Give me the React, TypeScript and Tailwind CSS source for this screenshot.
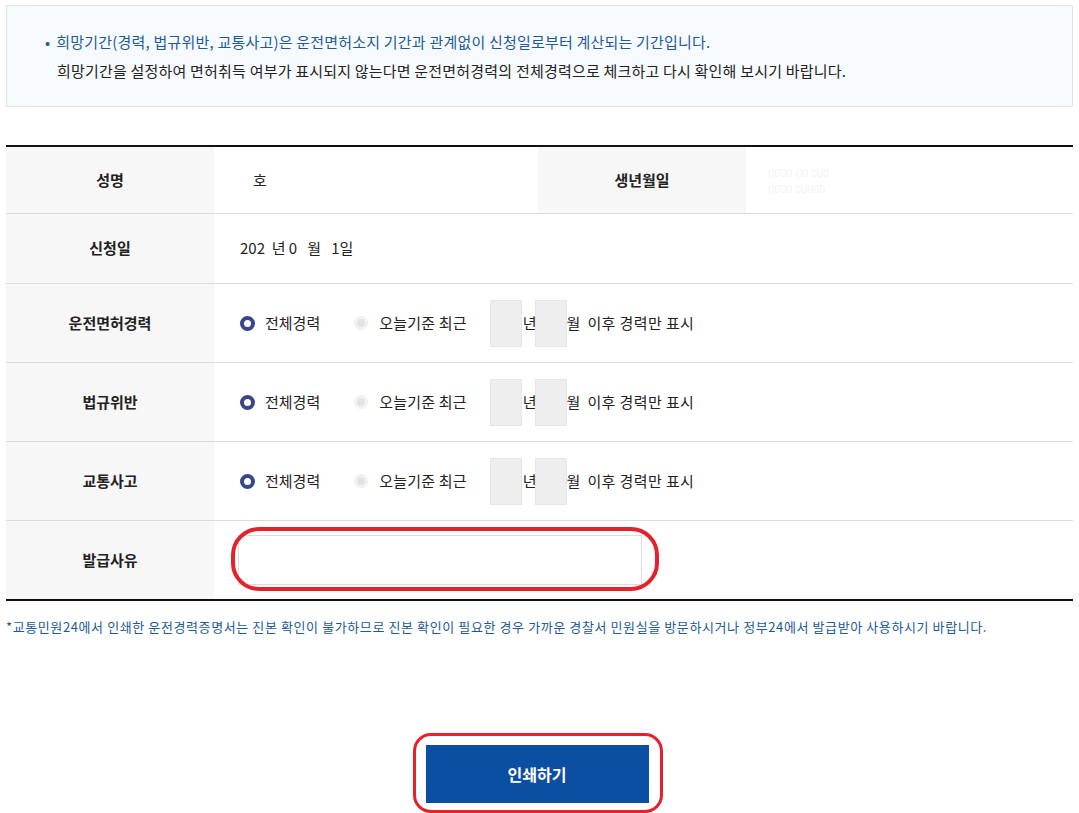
import React from "react";

const font = { fontFamily: '"Noto Sans CJK KR", "Noto Sans", sans-serif' };

const Label = ({ children }: { children: React.ReactNode }) => (
  <div className="w-[208px] shrink-0 bg-[#f7f7f7] flex items-center justify-center text-[15px] font-bold text-[#222]">
    {children}
  </div>
);

const PeriodRow = ({ title }: { title: string }) => (
  <div className="flex h-[79px] border-b border-[#dcdcdc]">
    <Label>{title}</Label>
    <div className="flex items-center pl-[26px] text-[15px] text-[#222]">
      <span className="w-[15px] h-[15px] rounded-full border-[4px] border-[#3a4787] bg-white" />
      <span className="ml-[10px]">전체경력</span>
      <span className="ml-[34px] w-[14px] h-[14px] rounded-full border border-[#eeeeee] bg-[#f3f3f3] flex items-center justify-center">
        <span className="w-[8px] h-[8px] rounded-full bg-[#e3e3e3]" />
      </span>
      <span className="ml-[11px] tracking-[0.2px]">오늘기준 최근</span>
      <span className="ml-[23px] w-[32px] h-[47px] bg-[#eeeeee] border border-[#e6e6e6]" />
      <span className="ml-[1px]">년</span>
      <span className="ml-[-2px] w-[32px] h-[47px] bg-[#eeeeee] border border-[#e6e6e6]" />
      <span>월</span>
      <span className="ml-[7px] tracking-[0.4px]">이후 경력만 표시</span>
    </div>
  </div>
);

export default function App() {
  return (
    <div className="w-[1079px] h-[813px] bg-white px-[6px] pt-[5px]" style={font}>
      <div className="h-[102px] border border-[#e3e3e3] bg-[#f7fafd] pl-[38px] pt-[21px] text-[15px] leading-[29px] tracking-[0.2px]">
        <p className="text-[#1c5b98]">
          <span className="mr-[6px]">•</span>희망기간(경력, 법규위반, 교통사고)은 운전면허소지 기간과 관계없이 신청일로부터 계산되는 기간입니다.
        </p>
        <p className="pl-[12px] text-[#222]">
          희망기간을 설정하여 면허취득 여부가 표시되지 않는다면 운전면허경력의 전체경력으로 체크하고 다시 확인해 보시기 바랍니다.
        </p>
      </div>

      <div className="mt-[38px] border-t-2 border-b-2 border-[#111]">
        <div className="flex h-[67px] border-b border-[#dcdcdc]">
          <Label>성명</Label>
          <div className="w-[324px] flex items-center pl-[39px] text-[15px] text-[#222]">호</div>
          <Label>생년월일</Label>
          <div className="flex-1 flex flex-col justify-center pl-[22px] text-[11px] text-[#f4f4f4] leading-[16px]">
            <span>0000-00 000</span>
            <span>0000 00000</span>
          </div>
        </div>
        <div className="flex h-[70px] border-b border-[#dcdcdc]">
          <Label>신청일</Label>
          <div className="flex items-center pl-[26px] text-[15px] text-[#222] whitespace-pre">
            202  년 0   월   1일
          </div>
        </div>
        <PeriodRow title="운전면허경력" />
        <PeriodRow title="법규위반" />
        <PeriodRow title="교통사고" />
        <div className="flex h-[78px]">
          <Label>발급사유</Label>
          <div className="flex items-center pl-[24px]">
            <div className="relative">
              <div className="w-[404px] h-[50px] border border-[#dddddd] bg-white" />
              <div className="absolute left-[-7px] top-[-8px] w-[428px] h-[64px] border-[4px] border-[#e3222b] rounded-[28px]" />
            </div>
          </div>
        </div>
      </div>

      <p className="mt-[16px] text-[13px] tracking-[0.6px] text-[#1c5b98]">
        *교통민원24에서 인쇄한 운전경력증명서는 진본 확인이 불가하므로 진본 확인이 필요한 경우 가까운 경찰서 민원실을 방문하시거나 정부24에서 발급받아 사용하시기 바랍니다.
      </p>

      <div className="mt-[108px] flex justify-center">
        <div className="relative ml-[-5px]">
          <button className="w-[223px] h-[58px] bg-[#0b4fa2] text-white text-[16px] font-bold">
            인쇄하기
          </button>
          <div className="absolute left-[-13px] top-[-12px] w-[250px] h-[80px] border-[3px] border-[#e3222b] rounded-[18px]" />
        </div>
      </div>
    </div>
  );
}
